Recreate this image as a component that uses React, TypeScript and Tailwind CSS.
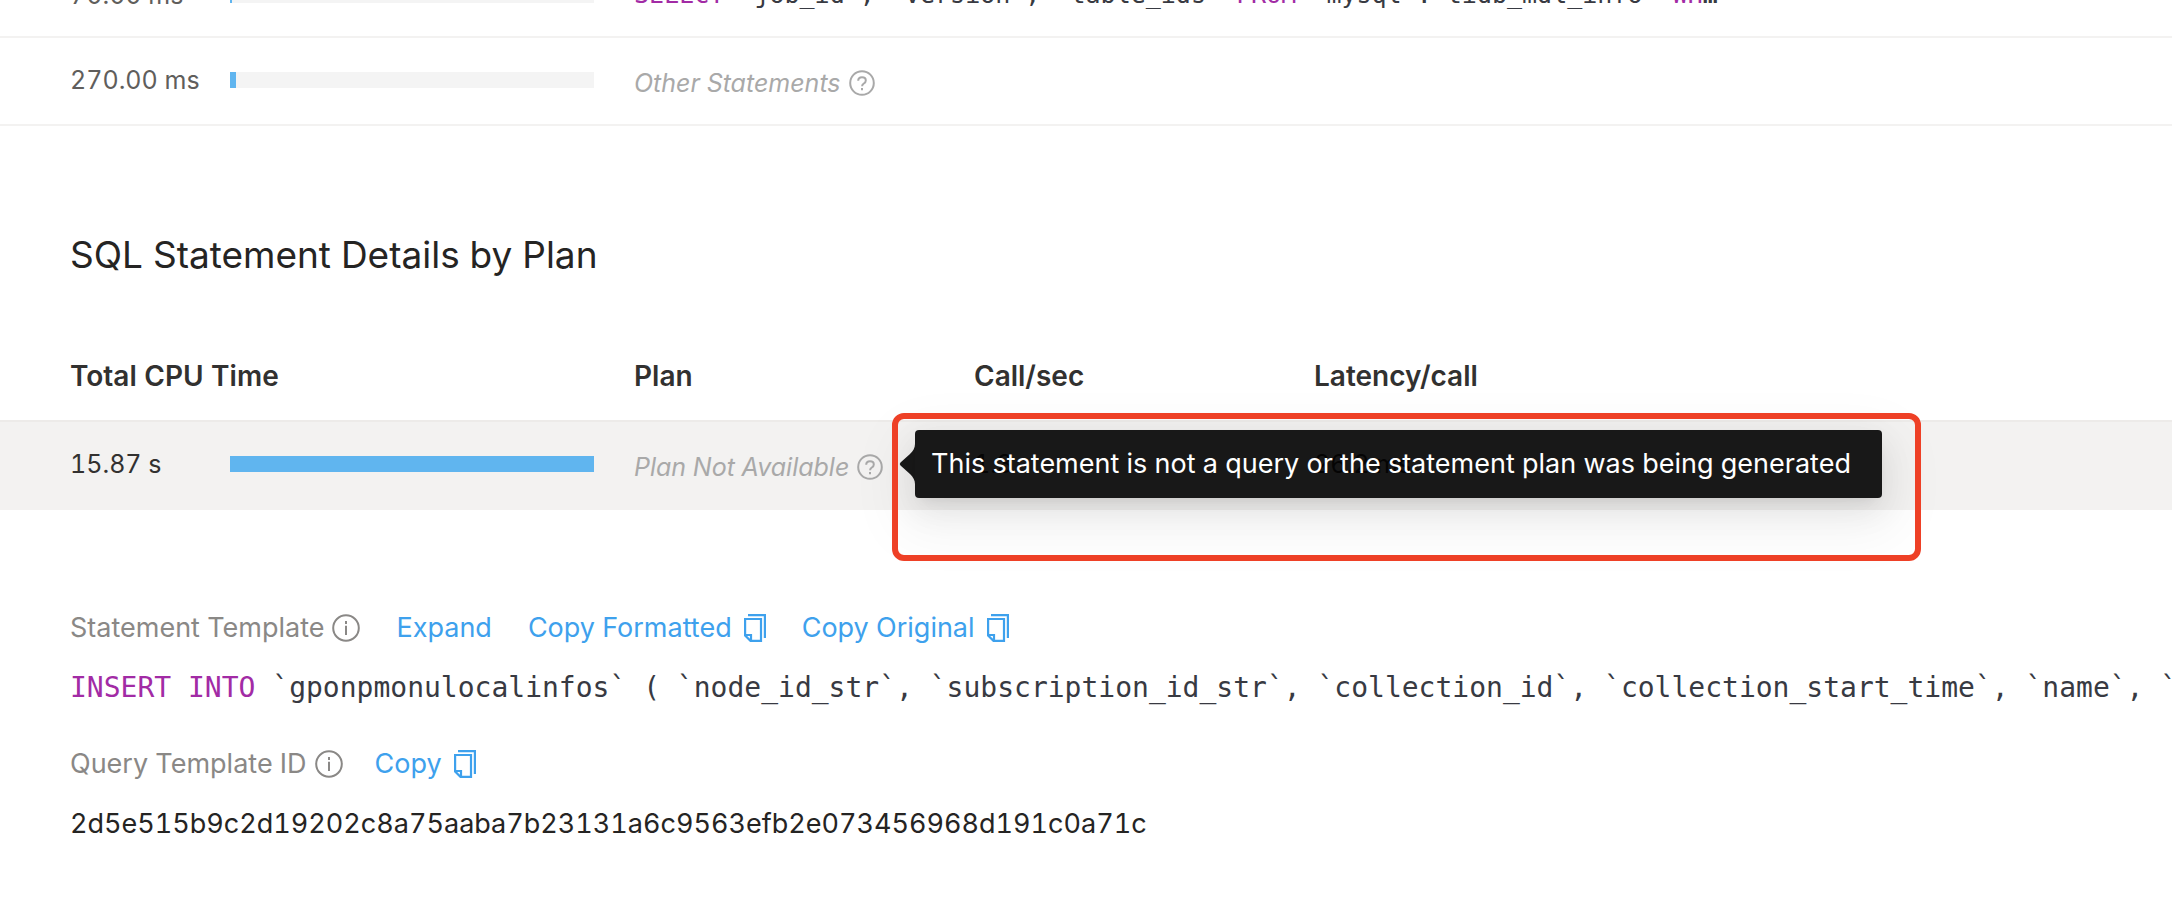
import React from 'react';

const QuestionIcon: React.FC = () => (
    <svg viewBox="0 0 26 26" className="h-[26px] w-[26px] shrink-0" fill="none" stroke="currentColor" strokeWidth="2">
        <circle cx="13" cy="13" r="11.8" />
        <path d="M9.2 10.8C9.2 8.4 10.8 7.2 13 7.2s3.8 1.2 3.8 3.2c0 1.6-.9 2.3-2 3.1-1.2.8-1.7 1.3-1.7 2.7" />
        <path d="M13 18v2.3" />
    </svg>
);

const InfoIcon: React.FC = () => (
    <svg viewBox="0 0 28 28" className="h-7 w-7 shrink-0" fill="none" stroke="currentColor" strokeWidth="2">
        <circle cx="14" cy="14" r="12.8" />
        <path d="M14 11.8v9.2" />
        <path d="M14 7v3" />
    </svg>
);

const CopyIcon: React.FC = () => (
    <svg viewBox="0 0 22 28" className="h-7 w-[22px] shrink-0" fill="none" stroke="currentColor" strokeWidth="2.2">
        <path d="M4 1.1h16.900V24" />
        <path d="M1.100 5h15.900v21.900H6.500L1.100 21.500z" />
        <path d="M1.500 21H7v6" />
    </svg>
);

const Bar: React.FC<{ percent: number }> = ({ percent }) => (
    <div className="h-4 w-[364px] bg-[#f4f4f4]">
        <div className="h-full bg-[#60b5ef]" style={{ width: `${percent}%` }} />
    </div>
);

const Keyword: React.FC<{ children: React.ReactNode }> = ({ children }) => (
    <span className="text-[#a22ba5]">{children}</span>
);

const App: React.FC = () => {
    return (
        <main className="overflow-hidden bg-white font-[Inter,sans-serif] text-[25px] leading-10 tabular-nums text-[#252423]">
            {/* Top statements */}
            <table className="-mt-11 w-full table-fixed border-separate border-spacing-0 text-[#605e5c]">
                <colgroup>
                    <col className="w-[230px]" />
                    <col className="w-[404px]" />
                    <col />
                </colgroup>
                <tbody>
                    <tr className="h-[82px]">
                        <td className="border-b-2 border-[#f3f2f1] pb-0.5 pl-[70px] whitespace-nowrap">70.00 ms</td>
                        <td className="border-b-2 border-[#f3f2f1] pb-0.5"><Bar percent={0.5} /></td>
                        <td className="border-b-2 border-[#f3f2f1] pb-0.5">
                            <code className="block w-[1090px] truncate font-['DejaVu_Sans_Mono',monospace] text-[25px] text-[#383a42]">
                                <Keyword>SELECT</Keyword> `job_id`, `version`, `table_ids` <Keyword>FROM</Keyword> `mysql`.`tidb_mdl_info` <Keyword>WHERE</Keyword> `job_id`
                            </code>
                        </td>
                    </tr>
                    <tr className="h-[88px]">
                        <td className="border-b-2 border-[#f3f2f1] pb-0.5 pl-[70px] whitespace-nowrap">270.00 ms</td>
                        <td className="border-b-2 border-[#f3f2f1] pb-0.5"><Bar percent={1.6} /></td>
                        <td className="border-b-2 border-[#f3f2f1] pt-1">
                            <span className="flex items-center gap-2 italic text-[#a9a9a9]">
                                Other Statements <QuestionIcon />
                            </span>
                        </td>
                    </tr>
                </tbody>
            </table>

            <h2 className="mt-[103px] pl-[70px] text-[37px] leading-[52px]">SQL Statement Details by Plan</h2>

            {/* Details by plan */}
            <div className="relative mt-[51px]">
                <table className="w-full table-fixed border-separate border-spacing-0 text-[#323130]">
                    <colgroup>
                        <col className="w-[230px]" />
                        <col className="w-[404px]" />
                        <col className="w-[340px]" />
                        <col className="w-[340px]" />
                        <col />
                    </colgroup>
                    <thead>
                        <tr className="h-[90px] text-left text-[28px]">
                            <th colSpan={2} className="border-b-2 border-[#edebe9] pl-[70px] font-semibold">Total CPU Time</th>
                            <th className="border-b-2 border-[#edebe9] font-semibold">Plan</th>
                            <th className="border-b-2 border-[#edebe9] font-semibold">Call/sec</th>
                            <th className="border-b-2 border-[#edebe9] font-semibold">Latency/call</th>
                        </tr>
                    </thead>
                    <tbody>
                        <tr className="h-[88px] bg-[#f3f2f1]">
                            <td className="pb-1 pl-[70px]">15.87 s</td>
                            <td className="pb-1"><Bar percent={100} /></td>
                            <td className="pt-0.5">
                                <span className="flex items-center gap-2 italic whitespace-nowrap text-[#a9a9a9]">
                                    Plan Not Available <QuestionIcon />
                                </span>
                            </td>
                            <td className="pb-1">1.3</td>
                            <td className="pb-1">26.2 ms</td>
                        </tr>
                    </tbody>
                </table>
                <div
                    role="tooltip"
                    className="absolute top-[98px] left-[915px] flex h-[68px] min-w-[967px] items-center rounded-sm bg-black/90 px-4 text-[27px] whitespace-nowrap text-white shadow-[0_6px_12px_-8px_rgba(0,0,0,0.12),0_12px_32px_rgba(0,0,0,0.08),0_18px_56px_16px_rgba(0,0,0,0.05)]"
                >
                    <svg viewBox="0 0 16 40" className="absolute top-[14px] right-full h-10 w-4" fill="black" fillOpacity="0.9">
                        <path d="M16 0v40c0-4-2-7-5-10L1.500 21.500q-1.500-1.500 0-3L11 10c3-3 5-6 5-10z" />
                    </svg>
                    This statement is not a query or the statement plan was being generated
                </div>
                <div className="absolute top-[81px] left-[892px] h-[148px] w-[1029px] rounded-xl border-[6px] border-[#ee4026]" />
            </div>

            <section className="mt-[98px] pb-14 pl-[70px] text-[27px]">
                <div className="flex items-center gap-9">
                    <span className="flex items-center gap-2 text-[#8a8886]">Statement Template <InfoIcon /></span>
                    <button className="text-[#3ea1ed]">Expand</button>
                    <button className="flex items-center gap-3 text-[#3ea1ed]">Copy Formatted <CopyIcon /></button>
                    <button className="flex items-center gap-3 text-[#3ea1ed]">Copy Original <CopyIcon /></button>
                </div>
                <code className="mt-5 block overflow-hidden font-['DejaVu_Sans_Mono',monospace] text-[28px] whitespace-nowrap text-[#383a42]">
                    <Keyword>INSERT INTO</Keyword> `gponpmonulocalinfos` ( `node_id_str`, `subscription_id_str`, `collection_id`, `collection_start_time`, `name`, `value`
                </code>
                <div className="mt-9 flex items-center gap-8">
                    <span className="flex items-center gap-2 text-[#8a8886]">Query Template ID <InfoIcon /></span>
                    <button className="flex items-center gap-3 text-[#3ea1ed]">Copy <CopyIcon /></button>
                </div>
                <p className="mt-5">2d5e515b9c2d19202c8a75aaba7b23131a6c9563efb2e073456968d191c0a71c</p>
            </section>
        </main>
    );
};

export default App;
